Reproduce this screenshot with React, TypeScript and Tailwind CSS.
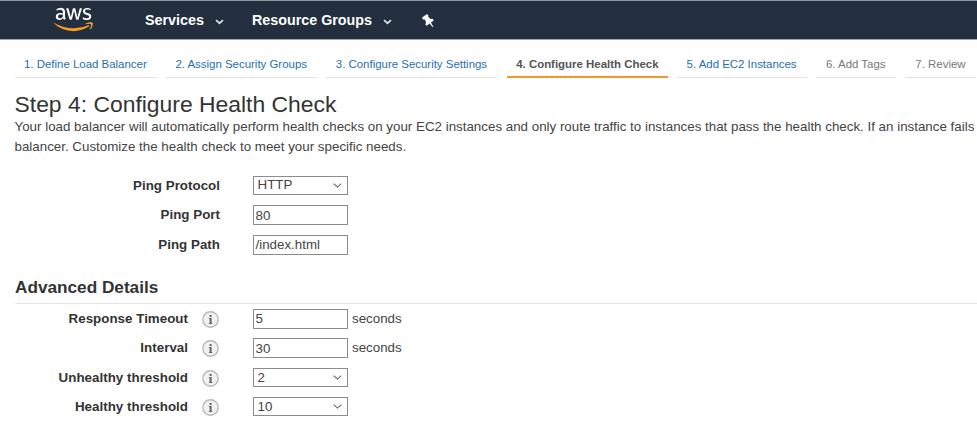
import type { ReactNode } from "react";
import { FaAws } from "react-icons/fa";

const steps = [
  { label: "1. Define Load Balancer", box: "w-[142px]", text: "text-[#1f6fb2]" },
  { label: "2. Assign Security Groups", box: "w-[151px]", text: "text-[#1f6fb2]" },
  { label: "3. Configure Security Settings", box: "w-[171px]", text: "text-[#1f6fb2]" },
  { label: "4. Configure Health Check", box: "w-[161px]", text: "text-[#555] font-bold", active: true },
  { label: "5. Add EC2 Instances", box: "w-[130px]", text: "text-[#1f6fb2]" },
  { label: "6. Add Tags", box: "w-[80px]", text: "text-[#777]" },
  { label: "7. Review", box: "w-[70px]", text: "text-[#777]" },
];

function NavChevron() {
  return (
    <svg className="mt-[2px] h-[6px] w-[9px]" viewBox="0 0 9 6" fill="none">
      <path d="M1 1.1 L4.5 4.3 L8 1.1" stroke="#d8dade" strokeWidth="1.9" />
    </svg>
  );
}

function Pin() {
  return (
    <svg className="mt-px h-[14px] w-[12px]" viewBox="0 0 12 14" fill="#fff">
      <path d="M4.6 0.2 L6.4 1 L6.1 2.6 L8.2 4.8 L11 5 L11.6 6.8 L9 8.6 L11.3 12.8 L10.5 13 L7.6 9.6 L4.8 11.8 L3.4 10.8 L4 8 L2.8 5.6 L0.7 5.5 L0.2 3.4 Z" />
    </svg>
  );
}

function Info() {
  return (
    <svg className="mt-[2px] ml-[14px] h-[17px] w-[17px]" viewBox="0 0 17 17">
      <circle cx="8.5" cy="8.5" r="7.7" fill="#f1f1f1" stroke="#b9b9b9" strokeWidth="1.4" />
      <path d="M7.6 3.9h2v2h-2zM6.9 6.9h2.7v5.2h.7v1H6.9v-1h.7V7.9h-.7z" fill="#666" />
    </svg>
  );
}

function Field({ label, value, select, info, unit }: {
  label: string;
  value: string;
  select?: boolean;
  info?: boolean;
  unit?: ReactNode;
}) {
  return (
    <div className="flex h-[29.6px] items-start">
      <div className={`text-right font-bold leading-[20px] tracking-[0.02px] whitespace-nowrap text-[#333] ${info ? "w-[188px]" : "w-[220px]"}`}>{label}</div>
      {info && <Info />}
      <div className={`flex w-[95.5px] items-center justify-between border border-[#8c8c8c] leading-none ${info ? "ml-[33.5px]" : "ml-[32.5px]"} ${select ? "h-[19px] pr-[5px] pl-1" : "h-[20px] pl-[2px]"}`}>
        <span>{value}</span>
        {select && (
          <svg className="h-[5px] w-[9px]" viewBox="0 0 9 5" fill="none">
            <path d="M.7 .6 L4.5 4.1 L8.3 .6" stroke="#666" strokeWidth="1.1" />
          </svg>
        )}
      </div>
      {unit && <span className="ml-[4px] leading-[20px]">{unit}</span>}
    </div>
  );
}

export default function App() {
  return (
    <div className="h-[440px] w-[977px] overflow-hidden bg-white font-['Liberation_Sans',Arial,sans-serif] text-[13.35px] text-[#444]">
      <header className="flex h-10 items-center border-y border-t-[#8f969e] border-b-[#a4a9af] bg-[#232f3e] pl-[54px] text-[14.3px] font-bold text-white">
        <div className="relative -mt-px h-[31px] w-[39px]">
          <FaAws className="absolute inset-0 h-[31px] w-[39px] [clip-path:inset(0_0_12px_0)]" />
          <FaAws className="absolute inset-0 h-[31px] w-[39px] text-[#f79a1f] [clip-path:inset(19px_0_0_0)]" />
        </div>
        <div className="ml-[52px] flex w-[107px] items-center gap-[11px] pt-[2px]">Services <NavChevron /></div>
        <div className="flex w-[170px] items-center gap-[11px] pt-[2px] whitespace-nowrap">Resource Groups <NavChevron /></div>
        <Pin />
      </header>
      <nav className="flex h-[39px] items-start gap-[9.4px] pl-[14.5px] text-[11.45px]">
        {steps.map((s) => (
          <div key={s.label} className={`h-[38px] shrink-0 whitespace-nowrap pt-[15px] pl-[9.5px] leading-[18px] ${s.box} ${s.text} ${s.active ? "border-b-2 border-[#f3992c]" : "border-b border-[#e3e3e3]"}`}>
            {s.label}
          </div>
        ))}
      </nav>
      <main>
        <h1 className="mt-[12px] pl-[14.5px] text-[22.9px] leading-[26px] text-[#333]">Step 4: Configure Health Check</h1>
        <p className="pl-[14.5px] leading-[19.5px] whitespace-nowrap">
          Your load balancer will automatically perform health checks on your EC2 instances and only route traffic to instances that pass the health check. If an instance fails
          <br />
          balancer. Customize the health check to meet your specific needs.
        </p>
        <section className="mt-[19.6px] h-[90px]">
          <Field label="Ping Protocol" value="HTTP" select />
          <Field label="Ping Port" value="80" />
          <Field label="Ping Path" value="/index.html" />
        </section>
        <h2 className="mt-[11.4px] ml-[15px] h-[27px] border-b border-[#e6e6e6] text-[17.2px] leading-[20px] font-bold text-[#333]">Advanced Details</h2>
        <section className="mt-[4.6px]">
          <Field label="Response Timeout" value="5" info unit="seconds" />
          <Field label="Interval" value="30" info unit="seconds" />
          <Field label="Unhealthy threshold" value="2" info select />
          <Field label="Healthy threshold" value="10" info select />
        </section>
      </main>
    </div>
  );
}
